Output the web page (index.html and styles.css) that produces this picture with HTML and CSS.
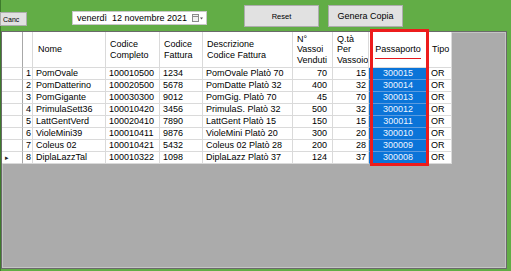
FILE: index.html
```html
<!DOCTYPE html>
<html lang="it">

<head>
    <meta charset="UTF-8">
    <title>Passaporti</title>
    <link rel="stylesheet" href="styles.css">
</head>

<body>
    <div class="toolbar">
        <button class="btn btn-canc">Canc</button>
        <div class="datepick">
            <span class="date-text">venerdì  12 novembre 2021</span>
            <span class="date-icon">
                <svg width="11" height="8" viewBox="0 0 11 8">
                    <rect x="0.5" y="0.5" width="6" height="7" fill="#f2f2f2" stroke="#8c8c8c" />
                    <line x1="1" y1="2.5" x2="6.5" y2="2.5" stroke="#8c8c8c" />
                    <path d="M8 3.5 L11 3.5 L9.5 5.5 Z" fill="#555" />
                </svg>
            </span>
        </div>
        <button class="btn btn-reset">Reset</button>
        <button class="btn btn-genera">Genera Copia</button>
    </div>

    <div class="grid">
        <table class="data">
            <thead>
                <tr>
                    <th class="c-sel"></th>
                    <th class="c-num"></th>
                    <th class="c-nome">Nome</th>
                    <th class="c-compl">Codice<br>Completo</th>
                    <th class="c-fatt">Codice<br>Fattura</th>
                    <th class="c-descr">Descrizione<br>Codice Fattura</th>
                    <th class="c-vass">N°<br>Vassoi<br>Venduti</th>
                    <th class="c-qta">Q.tà<br>Per<br>Vassoio</th>
                    <th class="c-pass"><span class="pass-head">Passaporto</span></th>
                    <th class="c-tipo">Tipo</th>
                </tr>
            </thead>
            <tbody>
                <tr>
                    <td class="c-sel"></td><td>1</td><td>PomOvale</td><td>100010500</td><td>1234</td>
                    <td>PomOvale Platò 70</td><td class="num">70</td><td class="num qta">15</td>
                    <td class="pass">300015</td><td>OR</td>
                </tr>
                <tr>
                    <td class="c-sel"></td><td>2</td><td>PomDatterino</td><td>100020500</td><td>5678</td>
                    <td>PomDatte Platò 32</td><td class="num">400</td><td class="num qta">32</td>
                    <td class="pass">300014</td><td>OR</td>
                </tr>
                <tr>
                    <td class="c-sel"></td><td>3</td><td>PomGigante</td><td>100030300</td><td>9012</td>
                    <td>PomGig. Platò 70</td><td class="num">45</td><td class="num qta">70</td>
                    <td class="pass">300013</td><td>OR</td>
                </tr>
                <tr>
                    <td class="c-sel"></td><td>4</td><td>PrimulaSett36</td><td>100010420</td><td>3456</td>
                    <td>PrimulaS. Platò 32</td><td class="num">500</td><td class="num qta">32</td>
                    <td class="pass">300012</td><td>OR</td>
                </tr>
                <tr>
                    <td class="c-sel"></td><td>5</td><td>LattGentVerd</td><td>100020410</td><td>7890</td>
                    <td>LattGent Platò 15</td><td class="num">150</td><td class="num qta">15</td>
                    <td class="pass">300011</td><td>OR</td>
                </tr>
                <tr>
                    <td class="c-sel"></td><td>6</td><td>VioleMini39</td><td>100010411</td><td>9876</td>
                    <td>VioleMini Platò 20</td><td class="num">300</td><td class="num qta">20</td>
                    <td class="pass">300010</td><td>OR</td>
                </tr>
                <tr>
                    <td class="c-sel"></td><td>7</td><td>Coleus 02</td><td>100010421</td><td>5432</td>
                    <td>Coleus 02 Platò 28</td><td class="num">200</td><td class="num qta">28</td>
                    <td class="pass">300009</td><td>OR</td>
                </tr>
                <tr>
                    <td class="c-sel"><span class="arrow">&#9656;</span></td><td>8</td><td>DiplaLazzTal</td><td>100010322</td><td>1098</td>
                    <td>DiplaLazz Platò 37</td><td class="num">124</td><td class="num qta">37</td>
                    <td class="pass">300008</td><td>OR</td>
                </tr>
            </tbody>
        </table>
        <div class="highlight"></div>
    </div>
</body>

</html>
```

FILE: styles.css
```css
body {
    margin: 0;
    padding: 0;
    width: 511px;
    height: 271px;
    overflow: hidden;
    background-color: #62ad46;
    font-family: "Liberation Sans", Arial, sans-serif;
    box-shadow: inset 1px 0 0 #3e7b2c;
}

.toolbar {
    height: 31px;
    display: flex;
    align-items: flex-start;
}

.btn {
    box-sizing: border-box;
    margin: 0;
    padding: 0;
    background-color: #e1e1e1;
    border: 1px solid #adadad;
    color: #000;
    font-family: "Liberation Sans", Arial, sans-serif;
}

.btn-canc {
    margin-top: 12px;
    width: 27px;
    height: 14px;
    font-size: 7px;
    text-align: left;
    padding-left: 2px;
}

.datepick {
    box-sizing: border-box;
    margin-top: 11px;
    margin-left: 45px;
    width: 135px;
    height: 14px;
    background-color: #fff;
    border: 1px solid #c8c8c8;
    display: flex;
    align-items: center;
    padding-left: 4px;
    font-size: 9px;
}

.date-text {
    white-space: pre;
    flex: 1;
}

.date-icon {
    display: flex;
    margin-right: 3px;
}

.btn-reset {
    margin-top: 5px;
    margin-left: 37px;
    width: 75px;
    height: 22px;
    font-size: 7.5px;
}

.btn-genera {
    margin-top: 5px;
    margin-left: 9px;
    width: 75px;
    height: 22px;
    font-size: 9px;
}

.grid {
    position: relative;
    box-sizing: border-box;
    margin-left: 1px;
    width: 506px;
    height: 238px;
    background-color: #ababab;
    border: 1px solid #6a6a6a;
    box-shadow: inset 1px 1px 0 #c4c4c4, inset -1px -1px 0 #c4c4c4;
}

.data {
    border-collapse: separate;
    border-spacing: 0;
    table-layout: fixed;
    width: 450px;
    font-size: 9px;
    color: #000;
    background-color: #fff;
}

.data th,
.data td {
    box-sizing: border-box;
    border-right: 1px solid #dadada;
    border-bottom: 1px solid #dadada;
    white-space: nowrap;
    overflow: hidden;
}

.data th {
    height: 36px;
    font-weight: normal;
    text-align: left;
    vertical-align: middle;
    line-height: 10.5px;
    padding: 0 0 0 4px;
}

.data td {
    height: 12px;
    line-height: 11px;
    padding: 0 0 0 3px;
}

.c-sel { width: 21px; }
.c-num { width: 10px; }
.c-nome { width: 73px; }
.c-compl { width: 54px; }
.c-fatt { width: 43px; }
.c-descr { width: 90px; }
.c-vass { width: 40px; }
.c-qta { width: 36px; }
.c-pass { width: 59px; }
.c-tipo { width: 24px; }

.data th.c-sel,
.data td.c-sel {
    border-right: 1px solid #a8a8a8;
    padding: 0;
}

.data th.c-nome {
    padding-left: 5px;
}

.data td.num {
    text-align: right;
    padding: 0 5px 0 0;
}

.data td.qta {
    padding-right: 2px;
}

.data th.c-pass {
    text-align: center;
    padding: 0;
}

.pass-head {
    display: inline-block;
    padding-top: 4px;
    padding-bottom: 4px;
    border-bottom: 1px solid #e3161c;
}

.data td.pass {
    background-color: #0b74d8;
    color: #eef4ff;
    text-align: center;
    padding: 0;
    border-bottom: 1px solid #5c9be0;
}

.arrow {
    display: block;
    font-size: 7px;
    padding-left: 3px;
    color: #222;
}

.highlight {
    position: absolute;
    box-sizing: border-box;
    left: 368px;
    top: -3px;
    width: 59px;
    height: 137px;
    border: 3px solid #ed1c1c;
}
```
